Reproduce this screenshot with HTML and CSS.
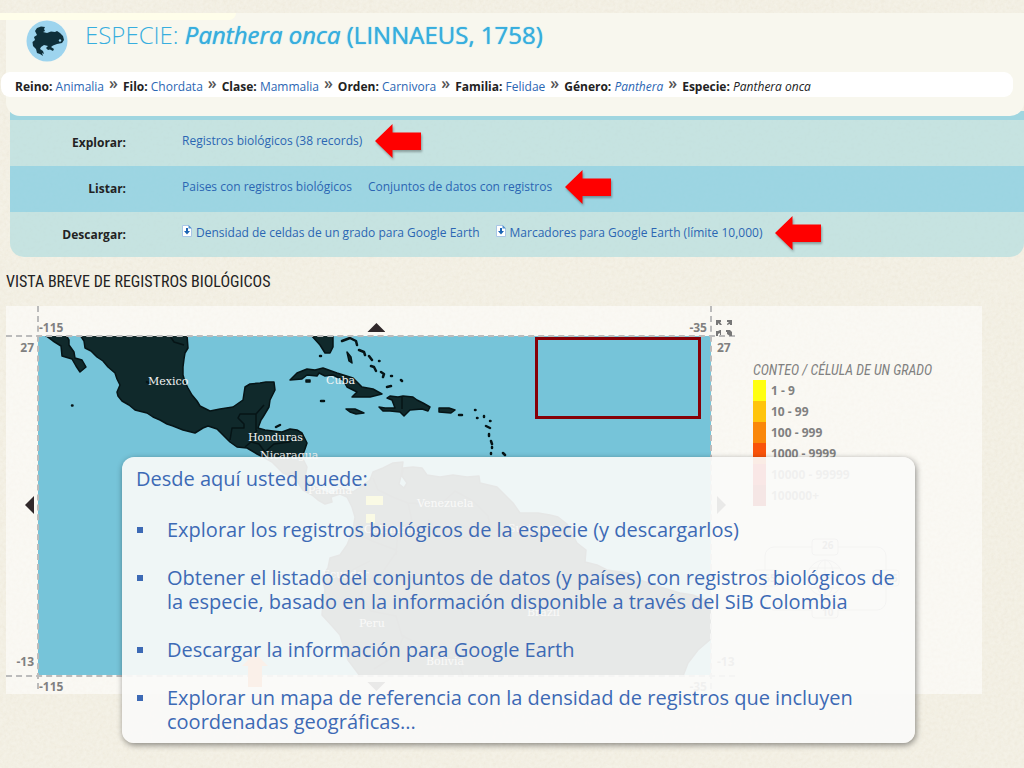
FILE: index.html
```html
<!DOCTYPE html>
<html lang="es">
<head>
<meta charset="utf-8">
<title>Especie: Panthera onca (Linnaeus, 1758)</title>
<link rel="stylesheet" href="styles.css">
</head>
<body>
<svg class="defs" width="0" height="0" aria-hidden="true">
  <symbol id="arrow" viewBox="0 0 46 34"><path d="M0 17 17.500 0v8.500H46v17.500H17.500V34z" fill="#f00"/></symbol>
  <symbol id="download" viewBox="0 0 10 12"><path d="M.5.5h6l3 3v8h-9z" fill="#fff" stroke="#a9c6e6"/><path d="M6.500 0v3.500H10z" fill="#4f8fd0"/><path d="M4 3h2v3h2L5 9.500 2 6h2z" fill="#1c64b4"/></symbol>
</svg>
<main class="page">
  <header class="head">
    <div class="head-title">
      <svg class="logo" viewBox="0 0 42 42" aria-hidden="true"><circle cx="21" cy="21" r="20.500" fill="#9dd4ee"/><path d="M9 11 11 8 15 6.500 19 7 18 9 19 11 17 12 21 13 25 11.500 29 12 31 11 34 13 37 16 38 20 36 23 31 24 27 25.500 25 27 28 29 27 31 24 29.500 22 30 20 28 22 26 18 25 15 27 14 29 17 31 18 34 16 33 17 36 14 34 11 33 10 29 7 26 6.500 22 9 20 8 17 11 15z" fill="#0f2f3a"/><circle cx="34" cy="20.500" r="1.200" fill="#9dd4ee"/></svg>
      <h1><span class="light">ESPECIE:</span> <em>Panthera onca</em> (LINNAEUS, 1758)</h1>
    </div>
    <nav class="crumbs">
      <span><b>Reino:</b> <a href="#">Animalia</a></span><i class="sep">»</i>
      <span><b>Filo:</b> <a href="#">Chordata</a></span><i class="sep">»</i>
      <span><b>Clase:</b> <a href="#">Mammalia</a></span><i class="sep">»</i>
      <span><b>Orden:</b> <a href="#">Carnivora</a></span><i class="sep">»</i>
      <span><b>Familia:</b> <a href="#">Felidae</a></span><i class="sep">»</i>
      <span><b>Género:</b> <a href="#"><em>Panthera</em></a></span><i class="sep">»</i>
      <span><b>Especie:</b> <em>Panthera onca</em></span>
    </nav>
  </header>

  <table class="actions">
    <tr><th scope="row">Explorar:</th><td><div class="links"><a href="#">Registros biológicos (38 records)</a><svg class="arrow"><use href="#arrow"/></svg></div></td></tr>
    <tr><th scope="row">Listar:</th><td><div class="links"><a href="#">Paises con registros biológicos</a><a href="#">Conjuntos de datos con registros</a><svg class="arrow"><use href="#arrow"/></svg></div></td></tr>
    <tr><th scope="row">Descargar:</th><td><div class="links"><a href="#"><svg class="dl"><use href="#download"/></svg>Densidad de celdas de un grado para Google Earth</a><a href="#"><svg class="dl"><use href="#download"/></svg>Marcadores para Google Earth (límite 10,000)</a><svg class="arrow"><use href="#arrow"/></svg></div></td></tr>
  </table>

  <h2>VISTA BREVE DE REGISTROS BIOLÓGICOS</h2>

  <section class="card">
    <div class="chart">
      <div class="axis top"><b>-115</b><button class="tri up" aria-label="Norte"></button><b>-35</b></div>
      <div class="side left"><b>27</b><button class="tri west" aria-label="Oeste"></button><b>-13</b></div>
      <svg class="map" viewBox="38 336 673 339" role="img" aria-label="Mapa de densidad de registros">
        <rect x="38" y="336" width="673" height="339" fill="#76c4d9"/>
        <g fill="#10292b" stroke="#061416" stroke-width="1.500" stroke-linejoin="round">
          <path d="M80 335 84 341 85 348 91 351 97 357 103 361 108 367 115 373 117 379 120 385 117 392 118 396 122 401 129 405 135 410 147 413 153 417 160 420 167 424 173 426 183 430 195 433 203 428 208 426 217 429 223 435 230 442 237 447 247 448 257 454 265 458 272 462 283 473 295 478 303 490 312 495 318 500 325 504 332 502 331 497 340 494 347 497 352 507 355 517 353 530 347 545 340 555 330 558 328 568 322 577 325 590 323 600 322 615 333 627 340 635 344 648 348 660 360 676H683L688 663 698 650 712 638V603L693 595 680 593 660 587 640 580 627 573 607 570 597 565 585 562 586 550 577 543 570 530 567 524 558 517 550 515 538 513 520 513 513 503 503 493 497 487 480 483 479 476 467 477 453 475 440 477 427 475 422 468 413 467 403 468 402 476 407 483 404 488 399 484 401 476 403 462 393 463 383 468 373 472 370 480 363 485 353 492 340 488 332 495 320 490 312 485 305 477 307 467 302 457 305 449 307 443 302 433 297 430 290 429 282 432 273 431 265 430 258 428 261 420 263 417 269 407 270 400 275 390 274 382 266 382 260 383 250 384 245 387 243 400 233 407 220 409 210 411 200 406 197 401 192 395 188 388 185 382 183 375 183 367 184 359 185 353 188 348 187 335z"/>
          <path d="M45 335 53 341 61 346 62 356 72 359 76 366 80 372 86 367 82 360 75 358 74 352 69 345 69 340 66 335zM311 335 320 345 325 353 330 353 333 347 333 335z"/>
          <path d="M290 380 297 373 307 369 315 370 323 368 337 373 353 378 362 387 373 389 382 394 370 397 352 397 357 392 347 387 343 380 333 375 325 376 319 373 317 376 307 375 302 379z"/>
          <path d="M387 398 390 396 398 397 403 396 413 397 417 400 423 403 430 407 428 411 422 409 410 410 404 416 400 412 390 411 383 411 379 407 385 408 395 408 392 400zM346 409 355 409 364 413 356 414 350 412zM439 408 449 408 455 410 451 413 439 412z"/>
          <path d="M306 380h4v2h-4zM347 352l2 9 3 2-1-6z"/>
          <path d="M147 382l2 1M72 405.500h.5M320 356h1M321 401h3M276 427l4-2M490 421h.5M477 418h.5M484 416v1M486 426l4 2M489 434v2M491 441l1 3M492 447v1M491 453v1M503 453l2 2M342 341l8-3 6 3 1 4M359 350l5 2 1 3M369 356l3 4M371 366l3 1 2 4M379 361h.5M381 372l3 2-1 3M391 376h1M401 380l1 1M387 387l4-1M459 415h3M475 410h.5" fill="none" stroke-width="2.500" stroke-linecap="round"/>
          <path d="M170 336l4 6 10 3M230 440l2-12 12 0 0-4-6-6 2-4h16v16M256 414l8-9M245 447l6-5 8 2 6 8M257 430l-6 8M265 452l9-8 15-2 14-8M402 397v12M285 473l12 0M373 478l5 12 17 8 13 5 4 18-14 8-2 26M408 503l32 2 15-14 18 10 15 15 3 16 26-7M488 530l-21 8-30-8-9-10M396 550l-24-9-17-9M397 551l-15 22-16 8-5 13 10 17 25 5 6 20 29 13 27 12 5 14M330 573l9 8 15-12 16-8M404 635l-8 20-22 14" fill="none"/>
        </g>
        <g fill="#ff0"><rect x="366" y="496" width="17" height="9"/><rect x="366" y="514" width="9" height="9"/></g>
        <g class="places">
          <text x="148" y="385">Mexico</text><text x="326" y="384">Cuba</text><text x="248" y="441">Honduras</text><text x="260" y="459">Nicaragua</text><text x="308" y="494">Panama</text><text x="417" y="507">Venezuela</text><text x="364" y="533">Colombia</text><text x="508" y="532">Suriname</text><text x="322" y="578">Ecuador</text><text x="359" y="627">Peru</text><text x="527" y="616">Brazil</text><text x="426" y="665">Bolivia</text>
        </g>
        <rect x="536.500" y="338.500" width="163" height="79" fill="none" stroke="#870006" stroke-width="3"/>
      </svg>
      <div class="side right"><b>27</b><button class="tri east" aria-label="Este"></button><b>-13</b></div>
      <div class="axis bottom"><b>-115</b><button class="tri down" aria-label="Sur"></button><b>-35</b></div>
      <svg class="expand" viewBox="0 0 16 16" aria-hidden="true"><path d="M0 0h5v2H4l2 3H4L2 3v2H0zM16 0v5h-2V4l-3 1V4l2-2h-2V0zM0 16v-5h2l2-1h1v5H4v-2l-2 1v2zM16 16h-2l-3-2v-2h-1v-2h4l2 2z" fill="#777"/></svg>
      <svg class="marker" viewBox="0 0 26 34" aria-hidden="true"><path d="M13 0 26 13h-6v21H6V13H0z" fill="#f58233"/></svg>
    </div>
    <aside class="legend">
      <h3>CONTEO / CÉLULA DE UN GRADO</h3>
      <ul>
        <li class="c1">1 - 9</li><li class="c2">10 - 99</li><li class="c3">100 - 999</li><li class="c4">1000 - 9999</li><li class="c5">10000 - 99999</li><li class="c6">100000+</li>
      </ul>
      <svg class="extent" viewBox="0 0 148 82" aria-hidden="true"><g fill="none" stroke="#aaa"><rect x="12" y="10" width="121" height="63" rx="9"/><circle cx="72" cy="41" r="18"/><ellipse cx="72" cy="41" rx="9" ry="18"/><path d="M72 23v36M54 41h36M57 31h30M57 51h30"/></g><g fill="#f7f5ef" stroke="#aaa"><rect x="59" y="2" width="26" height="16" rx="3"/><rect x="59" y="65" width="26" height="16" rx="3"/><rect x="1" y="33" width="25" height="16" rx="3"/><rect x="120" y="33" width="26" height="16" rx="3"/></g><g class="nums"><text x="69" y="12">26</text><text x="69" y="79">10</text><text x="8" y="45">-55</text><text x="130" y="45">-35</text></g></svg>
    </aside>
  </section>

  <section class="note">
    <p>Desde aquí usted puede:</p>
    <ul>
      <li>Explorar los registros biológicos de la especie (y descargarlos)</li>
      <li>Obtener el listado del conjuntos de datos (y países) con registros biológicos de la especie, basado en la información disponible a través del SiB Colombia</li>
      <li>Descargar la información para Google Earth</li>
      <li>Explorar un mapa de referencia con la densidad de registros que incluyen coordenadas geográficas...</li>
    </ul>
  </section>
</main>
</body>
</html>
```

FILE: styles.css
```css
* { box-sizing: border-box; }
body {
  margin: 0;
  background-color: #f4f1e6;
  background-image: url("data:image/svg+xml,%3Csvg xmlns='http://www.w3.org/2000/svg' width='256' height='256'%3E%3Cfilter id='n'%3E%3CfeTurbulence type='fractalNoise' baseFrequency='.3' numOctaves='3' stitchTiles='stitch'/%3E%3CfeColorMatrix values='0 0 0 0 .6 0 0 0 0 .52 0 0 0 0 .35 .2 0 0 0 -.06'/%3E%3C/filter%3E%3Crect width='256' height='256' filter='url(%23n)'/%3E%3C/svg%3E");
  color: #222;
  font-family: "Open Sans", sans-serif;
  font-size: 12px;
  line-height: 16px;
}
.defs { position: absolute; }
a { color: #2b66b3; text-decoration: none; }
.page { position: relative; min-height: 100vh; padding-top: 13px; overflow: hidden; }

.head {
  position: relative;
  height: 103px;
  margin-left: 6px;
  padding-top: 7px;
  background: #f8f7ee;
  border-radius: 0 0 14px 14px;
}
.head::before {
  content: "";
  position: absolute;
  left: -6px;
  top: 0;
  width: 236px;
  height: 7px;
  background: #fffeea;
  border-bottom-right-radius: 7px;
}
.head-title { display: flex; align-items: flex-start; gap: 17px; height: 52px; padding-left: 20px; }
.logo { width: 42px; height: 42px; }
h1 { margin: 0; color: #37aede; font-size: 24px; line-height: 30px; font-weight: 400; text-shadow: 0 0 1px #37aede; }
.light { font-weight: 300; text-shadow: none; }
.crumbs {
  display: flex;
  align-items: center;
  gap: 5px;
  height: 25px;
  margin: 0 11px 0 -5px;
  padding: 4px 14px 0;
  background: #fff;
  border-radius: 9px;
  white-space: nowrap;
}
.sep { padding-bottom: 8px; font-style: normal; font-size: 16px; font-weight: 600; color: #555; }

.actions {
  width: calc(100% - 10px);
  margin: -5px 0 0 10px;
  border-collapse: separate;
  border-spacing: 0;
  border-top: 9px solid #a0d6e0;
  border-radius: 0 0 14px 14px;
  overflow: hidden;
}
.actions tr { height: 46px; background: rgba(173, 219, 222, .65); }
.actions tr:nth-child(2) { background: rgba(141, 208, 226, .85); }
.actions tr:last-child { height: 45px; }
.actions th { width: 116px; padding: 0; text-align: right; }
.actions td { padding: 0 0 4px 56px; }
.links { display: flex; align-items: center; gap: 16px; white-space: nowrap; }
.links a { display: flex; align-items: center; gap: 4px; }
.arrow { width: 46px; height: 34px; margin-left: -3px; filter: drop-shadow(1px 2px 1px rgba(0, 0, 0, .3)); overflow: visible; }
.dl { width: 10px; height: 12px; margin-bottom: 4px; }

h2, h3 { font-family: "Liberation Sans Narrow", "Roboto Condensed", "Open Sans Condensed", sans-serif; font-weight: 400; }
h2 { margin: 12px 0 12px 6px; font-size: 16px; line-height: 25px; }

.card {
  display: flex;
  height: 388px;
  margin: 0 42px 0 6px;
  background: rgba(255, 255, 255, .55);
  color: #808080;
}
.chart {
  position: relative;
  flex: 1;
  display: grid;
  grid-template: 30px auto 19px / 32px 1fr 24px;
}
.chart::before, .chart::after { content: ""; position: absolute; pointer-events: none; }
.chart::before { left: 0; right: 0; top: 29px; bottom: 17px; border: dashed #bbb; border-width: 2px 0; }
.chart::after { left: 31px; right: 23px; top: 0; bottom: 5px; border: dashed #bbb; border-width: 0 2px; }
.axis { grid-column: 2; display: flex; justify-content: space-between; align-items: center; }
.top { padding: 13px 4px 0 1px; }
.bottom { grid-row: 3; padding: 4px 4px 0 1px; }
.side { grid-row: 2; display: flex; flex-direction: column; justify-content: space-between; align-items: flex-end; padding: 4px 4px 5px 0; }
.right { grid-column: 3; align-items: flex-start; padding: 4px 0 5px 6px; }
.map { grid-area: 2 / 2; width: 100%; display: block; }
.places { fill: #f4f4f4; font: 11px "DejaVu Serif", serif; }
.tri { width: 18px; height: 9px; padding: 0; border: 0; background: #30282a; }
.up { clip-path: polygon(50% 0, 100% 100%, 0 100%); }
.down { clip-path: polygon(0 0, 100% 0, 50% 100%); }
.west, .east { width: 9px; height: 18px; }
.west { clip-path: polygon(0 50%, 100% 0, 100% 100%); }
.east { clip-path: polygon(0 0, 100% 50%, 0 100%); }
.expand { position: absolute; right: 3px; top: 14px; width: 16px; height: 16px; }
.marker { position: absolute; left: 236px; bottom: 7px; width: 26px; height: 34px; }

.legend { width: 247px; padding: 55px 0 0 18px; }
.legend h3 { margin: 0; font-size: 14px; line-height: 19px; font-style: italic; white-space: nowrap; }
.legend ul { margin: 0; padding: 0; list-style: none; font-weight: 700; }
.legend li { height: 21px; line-height: 21px; padding-left: 5px; border-left: 13px solid; }
.legend .c1 { border-color: #ff1; }
.legend .c2 { border-color: #ffc40c; }
.legend .c3 { border-color: #fa870a; }
.legend .c4 { border-color: #f9530a; }
.legend .c5 { border-color: #f01818; }
.legend .c6 { border-color: #c00000; }
.extent { display: block; width: 148px; height: 82px; margin-top: 31px; }
.nums { fill: #777; font-size: 10px; font-weight: 700; }

.note {
  position: absolute;
  left: 122px;
  right: 109px;
  top: 457px;
  padding: 10px 14px 9px;
  border-radius: 12px;
  background: rgba(250, 250, 249, .92);
  box-shadow: 1px 2px 6px rgba(0, 0, 0, .45);
  color: #3d6ab5;
  font-size: 20px;
  line-height: 24px;
}
.note p { margin: 0 0 27px; }
.note ul { display: grid; gap: 24px; margin: 0; padding: 0; list-style: none; }
.note li { position: relative; padding-left: 31px; }
.note li::before { content: ""; position: absolute; left: 1px; top: 9px; width: 6px; height: 6px; background: #3d6ab5; }
```
